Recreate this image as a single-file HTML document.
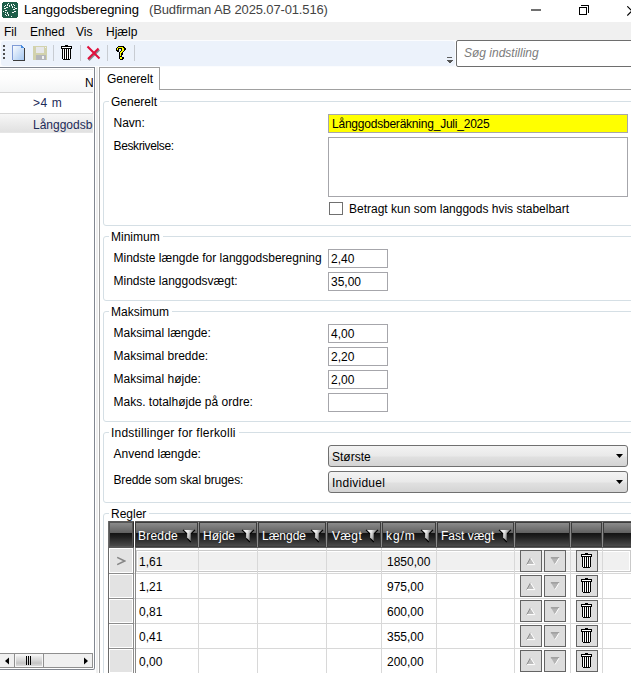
<!DOCTYPE html>
<html><head><meta charset="utf-8">
<style>
*{margin:0;padding:0;box-sizing:border-box}
html,body{width:631px;height:673px;overflow:hidden;background:#f0f0f0;font-family:"Liberation Sans",sans-serif;font-size:12px;color:#000}
.a{position:absolute}
.t{position:absolute;white-space:nowrap;line-height:14px;height:14px}
#title{left:0;top:0;width:631px;height:22px;background:#fff}
#menu{left:0;top:22px;width:631px;height:18px;background:#f0f0f0}
#tb{left:1px;top:41px;width:454px;height:25px;background:#ecf2fb;border-radius:3px}
.sep{position:absolute;top:45px;width:1px;height:16px;background:#c8ccd2}
#search{left:456px;top:40px;width:180px;height:27px;background:#fff;border:1px solid #6e6e6e;border-radius:2px}
#left{left:0;top:67px;width:95px;height:603px;background:#fff;border:1px solid #828790;border-left:none;border-radius:0 0 2px 0}
.gb{position:absolute;left:103px;width:540px;border:1px solid #d5dfe5;border-radius:3px}
.gbt{position:absolute;background:#fff;padding:0 3px 0 2px}
.inp{position:absolute;background:#fff;border:1px solid #a6a6ab}
.lbl{position:absolute;white-space:nowrap;line-height:14px;height:14px;left:113.5px}
.dd{position:absolute;left:328px;width:300px;height:22px;border:1px solid #707070;border-radius:3px;background:linear-gradient(#f3f3f3,#e9e9e9 50%,#e0e0e0 55%,#d4d4d4)}
.hdr{position:absolute;top:521px;height:27px;background:linear-gradient(#6d6d6d,#4f4f4f 45%,#141414 46%,#232323 80%,#3a3a3a)}
.hc{position:absolute;top:0;height:27px;border-left:1px solid #8a8a8a;border-right:1px solid #1a1a1a}
.ht{position:absolute;top:8px;color:#fff;white-space:nowrap;line-height:14px}
.hcell{background:linear-gradient(#707070,#5a5a5a 42%,#1a1a1a 43%,#252525 70%,#3d3d3d);border-left:1px solid #7a7a7a;border-right:1px solid #1e1e1e;border-bottom:1px solid #4a4a4a}
.btn{width:22px;height:22px;background:#dddddd;border:1px solid #646464}
</style></head><body>
<!-- title bar -->
<div id="title" class="a">
  <svg class="a" style="left:2px;top:2px" width="16" height="16" viewBox="0 0 16 16" shape-rendering="crispEdges"><path d="M1 0H15V1H16V15H15V16H1V15H0V1H1Z" fill="#1e5e4a"/><rect x="6" y="1" width="1" height="1" fill="#f4f8f6"/><rect x="9" y="2" width="1" height="1" fill="#f4f8f6"/><rect x="9" y="3" width="1" height="1" fill="#f4f8f6"/><rect x="11" y="2" width="1" height="1" fill="#f4f8f6"/><rect x="12" y="3" width="1" height="1" fill="#f4f8f6"/><rect x="7" y="3" width="1" height="1" fill="#f4f8f6"/><rect x="7" y="4" width="1" height="1" fill="#f4f8f6"/><rect x="5" y="2" width="1" height="1" fill="#f4f8f6"/><rect x="5" y="3" width="1" height="1" fill="#f4f8f6"/><rect x="3" y="3" width="1" height="1" fill="#f4f8f6"/><rect x="2" y="4" width="1" height="1" fill="#f4f8f6"/><rect x="4" y="5" width="1" height="1" fill="#f4f8f6"/><rect x="5" y="5" width="1" height="1" fill="#f4f8f6"/><rect x="10" y="4" width="1" height="1" fill="#f4f8f6"/><rect x="10" y="5" width="1" height="1" fill="#f4f8f6"/><rect x="12" y="5" width="1" height="1" fill="#f4f8f6"/><rect x="13" y="6" width="1" height="1" fill="#f4f8f6"/><rect x="14" y="6" width="1" height="1" fill="#f4f8f6"/><rect x="2" y="6" width="1" height="1" fill="#f4f8f6"/><rect x="3" y="6" width="1" height="1" fill="#f4f8f6"/><rect x="3" y="8" width="1" height="1" fill="#f4f8f6"/><rect x="4" y="8" width="1" height="1" fill="#f4f8f6"/><rect x="11" y="7" width="1" height="1" fill="#f4f8f6"/><rect x="12" y="7" width="1" height="1" fill="#f4f8f6"/><rect x="12" y="9" width="1" height="1" fill="#f4f8f6"/><rect x="13" y="9" width="1" height="1" fill="#f4f8f6"/><rect x="1" y="9" width="1" height="1" fill="#f4f8f6"/><rect x="3" y="10" width="1" height="1" fill="#f4f8f6"/><rect x="5" y="10" width="1" height="1" fill="#f4f8f6"/><rect x="5" y="11" width="1" height="1" fill="#f4f8f6"/><rect x="10" y="10" width="1" height="1" fill="#f4f8f6"/><rect x="11" y="10" width="1" height="1" fill="#f4f8f6"/><rect x="3" y="12" width="1" height="1" fill="#f4f8f6"/><rect x="4" y="13" width="1" height="1" fill="#f4f8f6"/><rect x="6" y="12" width="1" height="1" fill="#f4f8f6"/><rect x="6" y="13" width="1" height="1" fill="#f4f8f6"/><rect x="9" y="14" width="1" height="1" fill="#f4f8f6"/></svg>
  <div class="t" style="left:24px;top:2px;font-size:13px;line-height:16px;height:16px;color:#000">Langgodsberegning</div>
  <div class="t" style="left:149px;top:2px;font-size:13px;line-height:16px;height:16px;color:#444;letter-spacing:-0.14px">(Budfirman AB 2025.07-01.516)</div>
  <div class="a" style="left:531px;top:9px;width:10px;height:2px;background:#707070"></div>
  <div class="a" style="left:581px;top:5px;width:8px;height:8px;border:1px solid #000;border-left:none;border-bottom:none;border-top-right-radius:1px"></div>
  <div class="a" style="left:579px;top:7px;width:8px;height:8px;border:1px solid #000;background:#fff"></div>
  <svg class="a" style="left:627px;top:6px" width="10" height="10"><path d="M0.3 0.3L9.5 9.5M9.5 0.3L0.3 9.5" stroke="#000" stroke-width="1.1"/></svg>
</div>
<!-- menu -->
<div id="menu" class="a">
  <div class="t" style="left:4px;top:3px">Fil</div>
  <div class="t" style="left:30px;top:3px">Enhed</div>
  <div class="t" style="left:76px;top:3px">Vis</div>
  <div class="t" style="left:106px;top:3px">Hjælp</div>
</div>
<!-- toolbar -->
<div class="a" style="left:0;top:40px;width:631px;height:27px;background:#fbfcfe"></div>
<div id="tb" class="a"></div>
<svg class="a" style="left:3px;top:45px" width="3" height="15" shape-rendering="crispEdges"><g fill="#505050"><rect x="0" y="0" width="2" height="2"/><rect x="0" y="4" width="2" height="2"/><rect x="0" y="8" width="2" height="2"/><rect x="0" y="12" width="2" height="2"/></g></svg>
<svg class="a" style="left:12px;top:45px" width="14" height="16" viewBox="0 0 14 16" shape-rendering="crispEdges">
 <defs><linearGradient id="nd" x1="0" y1="0" x2="1" y2="1"><stop offset="0" stop-color="#ffffff"/><stop offset="1" stop-color="#a6c8f2"/></linearGradient></defs>
 <path d="M0 0H9L12 3V15H0Z" fill="url(#nd)"/>
 <rect x="0" y="0" width="1" height="15" fill="#7f9bd6"/><rect x="0" y="0" width="9" height="1" fill="#7f9bd6"/>
 <path d="M9 0L12 3H9Z" fill="#4a8de0"/>
 <rect x="12" y="3" width="1" height="13" fill="#3c3c3c"/><rect x="1" y="15" width="12" height="1" fill="#3c3c3c"/>
</svg>
<svg class="a" style="left:33px;top:46px" width="14" height="14" viewBox="0 0 14 14" shape-rendering="crispEdges">
 <rect x="0" y="0" width="14" height="14" fill="#d2d2ad"/>
 <rect x="3" y="1" width="8" height="6" fill="#e6e7ea"/>
 <rect x="3" y="9" width="10" height="5" fill="#b4b6ba"/>
 <rect x="9" y="10" width="2" height="3" fill="#f2f2f2"/>
 <rect x="12" y="1" width="1" height="1" fill="#f2f2f2"/>
</svg>
<div class="sep" style="left:53px"></div>
<svg class="a" style="left:61px;top:45px" width="11" height="15" viewBox="0 0 11 15" shape-rendering="crispEdges">
 <rect x="4" y="0" width="3" height="1" fill="#000"/>
 <rect x="0" y="1" width="11" height="3" fill="#000"/>
 <rect x="1" y="2" width="9" height="1" fill="#fff"/>
 <rect x="1" y="4" width="9" height="10" fill="#000"/>
 <rect x="2" y="14" width="7" height="1" fill="#000"/>
 <rect x="2" y="4" width="1" height="10" fill="#fff"/><rect x="4" y="4" width="1" height="10" fill="#fff"/><rect x="6" y="4" width="1" height="10" fill="#fff"/><rect x="8" y="4" width="1" height="10" fill="#fff"/>
</svg>
<div class="sep" style="left:80px"></div>
<svg class="a" style="left:84px;top:43px" width="20" height="20" viewBox="0 0 20 20">
 <path d="M4 16.5L14.5 6" stroke="#3a3a3a" stroke-width="2" opacity="0.55" transform="translate(0.8,0.8)"/>
 <path d="M3.5 3.5L15.5 15.5M14.5 5.5L4 16" stroke="#e0103c" stroke-width="2.1"/>
</svg>
<div class="sep" style="left:107px"></div>
<svg class="a" style="left:116px;top:46px" width="10" height="14" viewBox="0 0 10 14" shape-rendering="crispEdges"><rect x="2" y="0" width="1" height="1" fill="#000"/><rect x="3" y="0" width="1" height="1" fill="#000"/><rect x="4" y="0" width="1" height="1" fill="#000"/><rect x="5" y="0" width="1" height="1" fill="#000"/><rect x="6" y="0" width="1" height="1" fill="#000"/><rect x="7" y="0" width="1" height="1" fill="#000"/><rect x="1" y="1" width="1" height="1" fill="#000"/><rect x="2" y="1" width="1" height="1" fill="#ffff00"/><rect x="3" y="1" width="1" height="1" fill="#ffff00"/><rect x="4" y="1" width="1" height="1" fill="#ffff00"/><rect x="5" y="1" width="1" height="1" fill="#ffff00"/><rect x="6" y="1" width="1" height="1" fill="#ffff00"/><rect x="7" y="1" width="1" height="1" fill="#000"/><rect x="8" y="1" width="1" height="1" fill="#000"/><rect x="0" y="2" width="1" height="1" fill="#000"/><rect x="1" y="2" width="1" height="1" fill="#ffff00"/><rect x="2" y="2" width="1" height="1" fill="#000"/><rect x="3" y="2" width="1" height="1" fill="#000"/><rect x="4" y="2" width="1" height="1" fill="#000"/><rect x="5" y="2" width="1" height="1" fill="#000"/><rect x="6" y="2" width="1" height="1" fill="#ffff00"/><rect x="7" y="2" width="1" height="1" fill="#ffff00"/><rect x="8" y="2" width="1" height="1" fill="#000"/><rect x="9" y="2" width="1" height="1" fill="#000"/><rect x="0" y="3" width="1" height="1" fill="#000"/><rect x="1" y="3" width="1" height="1" fill="#ffff00"/><rect x="2" y="3" width="1" height="1" fill="#000"/><rect x="5" y="3" width="1" height="1" fill="#000"/><rect x="6" y="3" width="1" height="1" fill="#ffff00"/><rect x="7" y="3" width="1" height="1" fill="#ffff00"/><rect x="8" y="3" width="1" height="1" fill="#000"/><rect x="9" y="3" width="1" height="1" fill="#000"/><rect x="0" y="4" width="1" height="1" fill="#000"/><rect x="1" y="4" width="1" height="1" fill="#000"/><rect x="2" y="4" width="1" height="1" fill="#000"/><rect x="5" y="4" width="1" height="1" fill="#000"/><rect x="6" y="4" width="1" height="1" fill="#ffff00"/><rect x="7" y="4" width="1" height="1" fill="#ffff00"/><rect x="8" y="4" width="1" height="1" fill="#000"/><rect x="1" y="5" width="1" height="1" fill="#000"/><rect x="2" y="5" width="1" height="1" fill="#000"/><rect x="4" y="5" width="1" height="1" fill="#000"/><rect x="5" y="5" width="1" height="1" fill="#ffff00"/><rect x="6" y="5" width="1" height="1" fill="#ffff00"/><rect x="7" y="5" width="1" height="1" fill="#000"/><rect x="3" y="6" width="1" height="1" fill="#000"/><rect x="4" y="6" width="1" height="1" fill="#ffff00"/><rect x="5" y="6" width="1" height="1" fill="#ffff00"/><rect x="6" y="6" width="1" height="1" fill="#000"/><rect x="3" y="7" width="1" height="1" fill="#000"/><rect x="4" y="7" width="1" height="1" fill="#ffff00"/><rect x="5" y="7" width="1" height="1" fill="#000"/><rect x="6" y="7" width="1" height="1" fill="#000"/><rect x="3" y="8" width="1" height="1" fill="#000"/><rect x="4" y="8" width="1" height="1" fill="#ffff00"/><rect x="5" y="8" width="1" height="1" fill="#000"/><rect x="6" y="8" width="1" height="1" fill="#000"/><rect x="3" y="9" width="1" height="1" fill="#000"/><rect x="4" y="9" width="1" height="1" fill="#ffff00"/><rect x="5" y="9" width="1" height="1" fill="#000"/><rect x="3" y="10" width="1" height="1" fill="#000"/><rect x="4" y="10" width="1" height="1" fill="#000"/><rect x="5" y="10" width="1" height="1" fill="#000"/><rect x="3" y="11" width="1" height="1" fill="#000"/><rect x="4" y="11" width="1" height="1" fill="#ffff00"/><rect x="5" y="11" width="1" height="1" fill="#ffff00"/><rect x="6" y="11" width="1" height="1" fill="#000"/><rect x="7" y="11" width="1" height="1" fill="#000"/><rect x="3" y="12" width="1" height="1" fill="#000"/><rect x="4" y="12" width="1" height="1" fill="#ffff00"/><rect x="5" y="12" width="1" height="1" fill="#ffff00"/><rect x="6" y="12" width="1" height="1" fill="#000"/><rect x="7" y="12" width="1" height="1" fill="#000"/><rect x="4" y="13" width="1" height="1" fill="#000"/><rect x="5" y="13" width="1" height="1" fill="#000"/><rect x="6" y="13" width="1" height="1" fill="#000"/></svg>
<div class="sep" style="left:134px"></div>
<svg class="a" style="left:446px;top:57px" width="7" height="6" shape-rendering="crispEdges"><rect x="1" y="0" width="5" height="1" fill="#5e5e5e"/><path d="M0 3H7L3.5 6.5Z" fill="#555"/></svg>
<div id="search" class="a"><div class="t" style="left:7px;top:5px;font-style:italic;color:#7c7c7c">Søg indstilling</div></div>

<div class="a" style="left:0;top:67px;width:631px;height:606px;background:#fff"></div>
<div class="a" style="left:96px;top:67px;width:2px;height:606px;background:#efefef"></div>
<!-- left panel -->
<div id="left" class="a">
  <div class="a" style="left:0;top:1px;width:93px;height:24px;background:linear-gradient(#ffffff,#fdfdfd 40%,#f4f5f6);border-bottom:1px solid #d5d5d5;border-top:1px solid #ececec"></div>
  <div class="t" style="left:85px;top:8px;width:8px;overflow:hidden">N</div>
  <div class="t" style="left:33px;top:28px;color:#1c2a58;letter-spacing:0.6px">&gt;4 m</div>
  <div class="a" style="left:0;top:45px;width:93px;height:20px;background:linear-gradient(#f7f7f7,#ececec 50%,#e1e1e1);border-top:1px solid #d6d6d6;border-bottom:1px solid #e6e6e6"></div>
  <div class="t" style="left:33px;top:50px;width:60px;overflow:hidden;color:#1c2a58">Långgodsberegning</div>
  <!-- scrollbar -->
  <div class="a" style="left:0;top:585px;width:93px;height:15px;background:#f0f0f0;border:1px solid #8f8f8f;border-left:none"></div>
  <svg class="a" style="left:5px;top:589px" width="5" height="8"><path d="M4 0.5V7.5L0 4Z" fill="#000"/></svg>
  <div class="a" style="left:14px;top:585px;width:30px;height:15px;background:linear-gradient(#ffffff,#e6e6e6 25%,#d6d6d6 50%,#c4c4c4 70%,#e4e4e4);border:1px solid #8f8f8f;box-shadow:inset 0 0 0 1px #f6f6f6"></div>
  <div class="a" style="left:26px;top:588px;width:1px;height:9px;background:#000;box-shadow:2px 0 0 #000,4px 0 0 #000"></div>
  <svg class="a" style="left:84px;top:589px" width="5" height="8"><path d="M0 0.5V7.5L4 4Z" fill="#000"/></svg>
</div>

<!-- tab control -->
<div class="a" style="left:99px;top:89px;width:540px;height:600px;background:#fff;border:1px solid #a0a0a0;border-right:none"></div>
<div class="a" style="left:99px;top:67px;width:61px;height:23px;background:#fff;border:1px solid #a0a0a0;border-bottom:none"></div>
<div class="t" style="left:107px;top:72px">Generelt</div>

<!-- group: Generelt -->
<div class="gb" style="top:101px;height:125px"></div>
<div class="gbt t" style="left:109px;top:95px">Generelt</div>
<div class="lbl" style="top:116px">Navn:</div>
<div class="lbl" style="top:139px;letter-spacing:-0.37px">Beskrivelse:</div>
<div class="inp" style="left:328px;top:114px;width:300px;height:19px;background:#ffff00"></div>
<div class="t" style="left:332px;top:117px;letter-spacing:-0.22px">Långgodsberäkning_Juli_2025</div>
<div class="inp" style="left:328px;top:137px;width:300px;height:60px"></div>
<div class="a" style="left:329px;top:202px;width:14px;height:13px;border:1px solid #707070;background:#fff"></div>
<div class="t" style="left:349px;top:202px">Betragt kun som langgods hvis stabelbart</div>

<!-- group: Minimum -->
<div class="gb" style="top:236px;height:65px"></div>
<div class="gbt t" style="left:109px;top:230px">Minimum</div>
<div class="lbl" style="top:251px">Mindste længde for langgodsberegning</div>
<div class="lbl" style="top:274px">Mindste langgodsvægt:</div>
<div class="inp" style="left:328px;top:249px;width:60px;height:19px"></div>
<div class="t" style="left:331px;top:252px">2,40</div>
<div class="inp" style="left:328px;top:272px;width:60px;height:19px"></div>
<div class="t" style="left:331px;top:275px">35,00</div>

<!-- group: Maksimum -->
<div class="gb" style="top:311px;height:111px"></div>
<div class="gbt t" style="left:109px;top:305px">Maksimum</div>
<div class="lbl" style="top:326px">Maksimal længde:</div>
<div class="lbl" style="top:349px">Maksimal bredde:</div>
<div class="lbl" style="top:372px">Maksimal højde:</div>
<div class="lbl" style="top:395px">Maks. totalhøjde på ordre:</div>
<div class="inp" style="left:328px;top:324px;width:60px;height:19px"></div>
<div class="t" style="left:331px;top:327px">4,00</div>
<div class="inp" style="left:328px;top:347px;width:60px;height:19px"></div>
<div class="t" style="left:331px;top:350px">2,20</div>
<div class="inp" style="left:328px;top:370px;width:60px;height:19px"></div>
<div class="t" style="left:331px;top:373px">2,00</div>
<div class="inp" style="left:328px;top:393px;width:60px;height:19px"></div>

<!-- group: Indstillinger -->
<div class="gb" style="top:432px;height:71px"></div>
<div class="gbt t" style="left:109px;top:426px;letter-spacing:0.22px">Indstillinger for flerkolli</div>
<div class="lbl" style="top:447px">Anvend længde:</div>
<div class="lbl" style="top:473px;letter-spacing:-0.13px">Bredde som skal bruges:</div>
<div class="dd" style="top:445px"></div>
<div class="t" style="left:332px;top:450px">Største</div>
<svg class="a" style="left:616px;top:454px" width="7" height="4"><path d="M0 0H7L3.5 4Z" fill="#000"/></svg>
<div class="dd" style="top:471px"></div>
<div class="t" style="left:332px;top:476px;letter-spacing:0.24px">Individuel</div>
<svg class="a" style="left:616px;top:480px" width="7" height="4"><path d="M0 0H7L3.5 4Z" fill="#000"/></svg>

<!-- group: Regler -->
<div class="gb" style="top:513px;height:200px"></div>
<div class="gbt t" style="left:109px;top:507px">Regler</div>

<div id="grid"><div class="a" style="left:108px;top:521px;width:540px;height:27px;background:#2e2e2e;border-top:1px solid #5a5a5a;border-bottom:1px solid #5a5a5a"></div>
<div class="a" style="left:109px;top:522px;width:24px;height:25px;border:1px solid #555;background:linear-gradient(#8a8a8a,#5e5e5e 10.5px,#141414 10.5px,#202020 14px,#4a4a4a)"></div>
<div class="a" style="left:134px;top:521px;width:1px;height:27px;background:#fff"></div>
<div class="a" style="left:135px;top:522px;width:63px;height:25px;border:1px solid #3c3c3c;background:linear-gradient(#8a8a8a,#5e5e5e 10.5px,#141414 10.5px,#202020 14px,#4a4a4a)"></div>
<div class="t" style="left:138px;top:529px;color:#fff;letter-spacing:0.2px">Bredde</div>
<svg class="a" style="left:182px;top:529px" width="14" height="14" viewBox="0 0 14 14"><path d="M1.5 1H12.5L8.7 4.8V13L5.2 9.5V4.8Z" fill="url(#fg)"/><path d="M1 0.8L5 4.8M13 0.8L9 4.8M5.2 9.3L8.8 13" stroke="#000" stroke-width="1.15" fill="none"/></svg>
<div class="a" style="left:199px;top:522px;width:58px;height:25px;border:1px solid #3c3c3c;background:linear-gradient(#8a8a8a,#5e5e5e 10.5px,#141414 10.5px,#202020 14px,#4a4a4a)"></div>
<div class="a" style="left:198px;top:522px;width:1px;height:25px;background:#8a8a8a"></div>
<div class="t" style="left:203px;top:529px;color:#fff;letter-spacing:0">Højde</div>
<svg class="a" style="left:241px;top:529px" width="14" height="14" viewBox="0 0 14 14"><path d="M1.5 1H12.5L8.7 4.8V13L5.2 9.5V4.8Z" fill="url(#fg)"/><path d="M1 0.8L5 4.8M13 0.8L9 4.8M5.2 9.3L8.8 13" stroke="#000" stroke-width="1.15" fill="none"/></svg>
<div class="a" style="left:258px;top:522px;width:68px;height:25px;border:1px solid #3c3c3c;background:linear-gradient(#8a8a8a,#5e5e5e 10.5px,#141414 10.5px,#202020 14px,#4a4a4a)"></div>
<div class="a" style="left:257px;top:522px;width:1px;height:25px;background:#8a8a8a"></div>
<div class="t" style="left:262px;top:529px;color:#fff;letter-spacing:0">Længde</div>
<svg class="a" style="left:310px;top:529px" width="14" height="14" viewBox="0 0 14 14"><path d="M1.5 1H12.5L8.7 4.8V13L5.2 9.5V4.8Z" fill="url(#fg)"/><path d="M1 0.8L5 4.8M13 0.8L9 4.8M5.2 9.3L8.8 13" stroke="#000" stroke-width="1.15" fill="none"/></svg>
<div class="a" style="left:327px;top:522px;width:54px;height:25px;border:1px solid #3c3c3c;background:linear-gradient(#8a8a8a,#5e5e5e 10.5px,#141414 10.5px,#202020 14px,#4a4a4a)"></div>
<div class="a" style="left:326px;top:522px;width:1px;height:25px;background:#8a8a8a"></div>
<div class="t" style="left:332px;top:529px;color:#fff;letter-spacing:0.35px">Vægt</div>
<svg class="a" style="left:365px;top:529px" width="14" height="14" viewBox="0 0 14 14"><path d="M1.5 1H12.5L8.7 4.8V13L5.2 9.5V4.8Z" fill="url(#fg)"/><path d="M1 0.8L5 4.8M13 0.8L9 4.8M5.2 9.3L8.8 13" stroke="#000" stroke-width="1.15" fill="none"/></svg>
<div class="a" style="left:382px;top:522px;width:54px;height:25px;border:1px solid #3c3c3c;background:linear-gradient(#8a8a8a,#5e5e5e 10.5px,#141414 10.5px,#202020 14px,#4a4a4a)"></div>
<div class="a" style="left:381px;top:522px;width:1px;height:25px;background:#8a8a8a"></div>
<div class="t" style="left:386px;top:529px;color:#fff;letter-spacing:0.9px">kg/m</div>
<svg class="a" style="left:420px;top:529px" width="14" height="14" viewBox="0 0 14 14"><path d="M1.5 1H12.5L8.7 4.8V13L5.2 9.5V4.8Z" fill="url(#fg)"/><path d="M1 0.8L5 4.8M13 0.8L9 4.8M5.2 9.3L8.8 13" stroke="#000" stroke-width="1.15" fill="none"/></svg>
<div class="a" style="left:437px;top:522px;width:77px;height:25px;border:1px solid #3c3c3c;background:linear-gradient(#8a8a8a,#5e5e5e 10.5px,#141414 10.5px,#202020 14px,#4a4a4a)"></div>
<div class="a" style="left:436px;top:522px;width:1px;height:25px;background:#8a8a8a"></div>
<div class="t" style="left:441px;top:529px;color:#fff;letter-spacing:0">Fast vægt</div>
<svg class="a" style="left:498px;top:529px" width="14" height="14" viewBox="0 0 14 14"><path d="M1.5 1H12.5L8.7 4.8V13L5.2 9.5V4.8Z" fill="url(#fg)"/><path d="M1 0.8L5 4.8M13 0.8L9 4.8M5.2 9.3L8.8 13" stroke="#000" stroke-width="1.15" fill="none"/></svg>
<div class="a" style="left:515px;top:522px;width:55px;height:25px;border:1px solid #3c3c3c;background:linear-gradient(#8a8a8a,#5e5e5e 10.5px,#141414 10.5px,#202020 14px,#4a4a4a)"></div>
<div class="a" style="left:514px;top:522px;width:1px;height:25px;background:#8a8a8a"></div>
<div class="a" style="left:571px;top:522px;width:31px;height:25px;border:1px solid #3c3c3c;background:linear-gradient(#8a8a8a,#5e5e5e 10.5px,#141414 10.5px,#202020 14px,#4a4a4a)"></div>
<div class="a" style="left:570px;top:522px;width:1px;height:25px;background:#8a8a8a"></div>
<div class="a" style="left:603px;top:522px;width:97px;height:25px;border:1px solid #3c3c3c;background:linear-gradient(#8a8a8a,#5e5e5e 10.5px,#141414 10.5px,#202020 14px,#4a4a4a)"></div>
<div class="a" style="left:602px;top:522px;width:1px;height:25px;background:#8a8a8a"></div>
<div class="a" style="left:108px;top:548px;width:540px;height:130px;background:#fff"></div>
<div class="a" style="left:110px;top:549px;width:22px;height:23px;background:#e3e3e3"></div>
<div class="a" style="left:108px;top:573px;width:540px;height:1px;background:#d8d8d8"></div>
<div class="a" style="left:108px;top:573px;width:26px;height:1px;background:#8c8c8c"></div>
<div class="a" style="left:136px;top:550px;width:495px;height:22px;background:#f0f0f0;border:1px solid #c9c9c9;box-shadow:inset 0 0 0 1px #fff"></div>
<svg class="a" style="left:116px;top:556px" width="10" height="10" viewBox="0 0 10 10"><path d="M1.2 1.3L8.6 5L1.2 8.7" stroke="#858585" stroke-width="1.5" fill="none" stroke-linejoin="miter"/></svg>
<div class="t" style="left:139px;top:555px">1,61</div>
<div class="t" style="left:387px;top:555px">1850,00</div>
<div class="a btn" style="left:520px;top:550px"></div>
<div class="a btn" style="left:544px;top:550px"></div>
<div class="a btn" style="left:576px;top:550px"></div>
<svg class="a" style="left:526px;top:557px" width="11" height="9" viewBox="0 0 11 9"><path d="M4.5 0.8L8.6 7.5H0.8Z" fill="#bdbdbd"/><path d="M4.5 0.8L0.8 7.6" stroke="#8c8c8c" stroke-width="1" fill="none"/><path d="M4.6 0.9L8.8 7.6H1" stroke="#ffffff" stroke-width="1" fill="none"/></svg>
<svg class="a" style="left:550px;top:557px" width="11" height="9" viewBox="0 0 11 9"><path d="M1 0.8H9L5 7.5Z" fill="#b4b4b4"/><path d="M0.8 0.8H9.2" stroke="#8c8c8c" stroke-width="1" fill="none"/><path d="M9.1 1L5 7.6" stroke="#ffffff" stroke-width="1" fill="none"/></svg>
<svg class="a" style="left:581px;top:553px" width="12" height="16" viewBox="0 0 12 16" shape-rendering="crispEdges"><rect x="4" y="0" width="3" height="1" fill="#000"/><rect x="0" y="1" width="11" height="3" fill="#000"/><rect x="1" y="2" width="9" height="1" fill="#fff"/><rect x="1" y="4" width="9" height="10" fill="#000"/><rect x="2" y="14" width="7" height="1" fill="#000"/><rect x="2" y="4" width="1" height="10" fill="#fff"/><rect x="4" y="4" width="1" height="10" fill="#fff"/><rect x="6" y="4" width="1" height="10" fill="#fff"/><rect x="8" y="4" width="1" height="10" fill="#fff"/></svg>
<div class="a" style="left:110px;top:575px;width:22px;height:22px;background:#e3e3e3"></div>
<div class="a" style="left:108px;top:598px;width:540px;height:1px;background:#d8d8d8"></div>
<div class="a" style="left:108px;top:598px;width:26px;height:1px;background:#8c8c8c"></div>
<div class="t" style="left:139px;top:580px">1,21</div>
<div class="t" style="left:387px;top:580px">975,00</div>
<div class="a btn" style="left:520px;top:575px"></div>
<div class="a btn" style="left:544px;top:575px"></div>
<div class="a btn" style="left:576px;top:575px"></div>
<svg class="a" style="left:526px;top:582px" width="11" height="9" viewBox="0 0 11 9"><path d="M4.5 0.8L8.6 7.5H0.8Z" fill="#bdbdbd"/><path d="M4.5 0.8L0.8 7.6" stroke="#8c8c8c" stroke-width="1" fill="none"/><path d="M4.6 0.9L8.8 7.6H1" stroke="#ffffff" stroke-width="1" fill="none"/></svg>
<svg class="a" style="left:550px;top:582px" width="11" height="9" viewBox="0 0 11 9"><path d="M1 0.8H9L5 7.5Z" fill="#b4b4b4"/><path d="M0.8 0.8H9.2" stroke="#8c8c8c" stroke-width="1" fill="none"/><path d="M9.1 1L5 7.6" stroke="#ffffff" stroke-width="1" fill="none"/></svg>
<svg class="a" style="left:581px;top:578px" width="12" height="16" viewBox="0 0 12 16" shape-rendering="crispEdges"><rect x="4" y="0" width="3" height="1" fill="#000"/><rect x="0" y="1" width="11" height="3" fill="#000"/><rect x="1" y="2" width="9" height="1" fill="#fff"/><rect x="1" y="4" width="9" height="10" fill="#000"/><rect x="2" y="14" width="7" height="1" fill="#000"/><rect x="2" y="4" width="1" height="10" fill="#fff"/><rect x="4" y="4" width="1" height="10" fill="#fff"/><rect x="6" y="4" width="1" height="10" fill="#fff"/><rect x="8" y="4" width="1" height="10" fill="#fff"/></svg>
<div class="a" style="left:110px;top:600px;width:22px;height:22px;background:#e3e3e3"></div>
<div class="a" style="left:108px;top:623px;width:540px;height:1px;background:#d8d8d8"></div>
<div class="a" style="left:108px;top:623px;width:26px;height:1px;background:#8c8c8c"></div>
<div class="t" style="left:139px;top:605px">0,81</div>
<div class="t" style="left:387px;top:605px">600,00</div>
<div class="a btn" style="left:520px;top:600px"></div>
<div class="a btn" style="left:544px;top:600px"></div>
<div class="a btn" style="left:576px;top:600px"></div>
<svg class="a" style="left:526px;top:607px" width="11" height="9" viewBox="0 0 11 9"><path d="M4.5 0.8L8.6 7.5H0.8Z" fill="#bdbdbd"/><path d="M4.5 0.8L0.8 7.6" stroke="#8c8c8c" stroke-width="1" fill="none"/><path d="M4.6 0.9L8.8 7.6H1" stroke="#ffffff" stroke-width="1" fill="none"/></svg>
<svg class="a" style="left:550px;top:607px" width="11" height="9" viewBox="0 0 11 9"><path d="M1 0.8H9L5 7.5Z" fill="#b4b4b4"/><path d="M0.8 0.8H9.2" stroke="#8c8c8c" stroke-width="1" fill="none"/><path d="M9.1 1L5 7.6" stroke="#ffffff" stroke-width="1" fill="none"/></svg>
<svg class="a" style="left:581px;top:603px" width="12" height="16" viewBox="0 0 12 16" shape-rendering="crispEdges"><rect x="4" y="0" width="3" height="1" fill="#000"/><rect x="0" y="1" width="11" height="3" fill="#000"/><rect x="1" y="2" width="9" height="1" fill="#fff"/><rect x="1" y="4" width="9" height="10" fill="#000"/><rect x="2" y="14" width="7" height="1" fill="#000"/><rect x="2" y="4" width="1" height="10" fill="#fff"/><rect x="4" y="4" width="1" height="10" fill="#fff"/><rect x="6" y="4" width="1" height="10" fill="#fff"/><rect x="8" y="4" width="1" height="10" fill="#fff"/></svg>
<div class="a" style="left:110px;top:625px;width:22px;height:22px;background:#e3e3e3"></div>
<div class="a" style="left:108px;top:648px;width:540px;height:1px;background:#d8d8d8"></div>
<div class="a" style="left:108px;top:648px;width:26px;height:1px;background:#8c8c8c"></div>
<div class="t" style="left:139px;top:630px">0,41</div>
<div class="t" style="left:387px;top:630px">355,00</div>
<div class="a btn" style="left:520px;top:625px"></div>
<div class="a btn" style="left:544px;top:625px"></div>
<div class="a btn" style="left:576px;top:625px"></div>
<svg class="a" style="left:526px;top:632px" width="11" height="9" viewBox="0 0 11 9"><path d="M4.5 0.8L8.6 7.5H0.8Z" fill="#bdbdbd"/><path d="M4.5 0.8L0.8 7.6" stroke="#8c8c8c" stroke-width="1" fill="none"/><path d="M4.6 0.9L8.8 7.6H1" stroke="#ffffff" stroke-width="1" fill="none"/></svg>
<svg class="a" style="left:550px;top:632px" width="11" height="9" viewBox="0 0 11 9"><path d="M1 0.8H9L5 7.5Z" fill="#b4b4b4"/><path d="M0.8 0.8H9.2" stroke="#8c8c8c" stroke-width="1" fill="none"/><path d="M9.1 1L5 7.6" stroke="#ffffff" stroke-width="1" fill="none"/></svg>
<svg class="a" style="left:581px;top:628px" width="12" height="16" viewBox="0 0 12 16" shape-rendering="crispEdges"><rect x="4" y="0" width="3" height="1" fill="#000"/><rect x="0" y="1" width="11" height="3" fill="#000"/><rect x="1" y="2" width="9" height="1" fill="#fff"/><rect x="1" y="4" width="9" height="10" fill="#000"/><rect x="2" y="14" width="7" height="1" fill="#000"/><rect x="2" y="4" width="1" height="10" fill="#fff"/><rect x="4" y="4" width="1" height="10" fill="#fff"/><rect x="6" y="4" width="1" height="10" fill="#fff"/><rect x="8" y="4" width="1" height="10" fill="#fff"/></svg>
<div class="a" style="left:110px;top:650px;width:22px;height:22px;background:#e3e3e3"></div>
<div class="a" style="left:108px;top:673px;width:540px;height:1px;background:#d8d8d8"></div>
<div class="a" style="left:108px;top:673px;width:26px;height:1px;background:#8c8c8c"></div>
<div class="t" style="left:139px;top:655px">0,00</div>
<div class="t" style="left:387px;top:655px">200,00</div>
<div class="a btn" style="left:520px;top:650px"></div>
<div class="a btn" style="left:544px;top:650px"></div>
<div class="a btn" style="left:576px;top:650px"></div>
<svg class="a" style="left:526px;top:657px" width="11" height="9" viewBox="0 0 11 9"><path d="M4.5 0.8L8.6 7.5H0.8Z" fill="#bdbdbd"/><path d="M4.5 0.8L0.8 7.6" stroke="#8c8c8c" stroke-width="1" fill="none"/><path d="M4.6 0.9L8.8 7.6H1" stroke="#ffffff" stroke-width="1" fill="none"/></svg>
<svg class="a" style="left:550px;top:657px" width="11" height="9" viewBox="0 0 11 9"><path d="M1 0.8H9L5 7.5Z" fill="#b4b4b4"/><path d="M0.8 0.8H9.2" stroke="#8c8c8c" stroke-width="1" fill="none"/><path d="M9.1 1L5 7.6" stroke="#ffffff" stroke-width="1" fill="none"/></svg>
<svg class="a" style="left:581px;top:653px" width="12" height="16" viewBox="0 0 12 16" shape-rendering="crispEdges"><rect x="4" y="0" width="3" height="1" fill="#000"/><rect x="0" y="1" width="11" height="3" fill="#000"/><rect x="1" y="2" width="9" height="1" fill="#fff"/><rect x="1" y="4" width="9" height="10" fill="#000"/><rect x="2" y="14" width="7" height="1" fill="#000"/><rect x="2" y="4" width="1" height="10" fill="#fff"/><rect x="4" y="4" width="1" height="10" fill="#fff"/><rect x="6" y="4" width="1" height="10" fill="#fff"/><rect x="8" y="4" width="1" height="10" fill="#fff"/></svg>
<div class="a" style="left:198px;top:548px;width:1px;height:130px;background:#d8d8d8"></div>
<div class="a" style="left:257px;top:548px;width:1px;height:130px;background:#d8d8d8"></div>
<div class="a" style="left:326px;top:548px;width:1px;height:130px;background:#d8d8d8"></div>
<div class="a" style="left:381px;top:548px;width:1px;height:130px;background:#d8d8d8"></div>
<div class="a" style="left:436px;top:548px;width:1px;height:130px;background:#d8d8d8"></div>
<div class="a" style="left:514px;top:548px;width:1px;height:130px;background:#d8d8d8"></div>
<div class="a" style="left:570px;top:548px;width:1px;height:130px;background:#d8d8d8"></div>
<div class="a" style="left:602px;top:548px;width:1px;height:130px;background:#d8d8d8"></div>
<div class="a" style="left:133px;top:548px;width:1px;height:130px;background:#8c8c8c"></div>
<div class="a" style="left:135px;top:548px;width:1px;height:130px;background:#8a8a8a"></div>
<div class="a" style="left:108px;top:521px;width:1px;height:160px;background:#6a6a6a"></div>
<svg width="0" height="0" style="position:absolute"><defs><linearGradient id="fg" x1="0" x2="1" y1="0" y2="0.3"><stop offset="0" stop-color="#ffffff"/><stop offset="0.45" stop-color="#e6e6e6"/><stop offset="0.75" stop-color="#9a9a9a"/><stop offset="1" stop-color="#505050"/></linearGradient></defs></svg></div><!--endgrid-->
</body></html>
